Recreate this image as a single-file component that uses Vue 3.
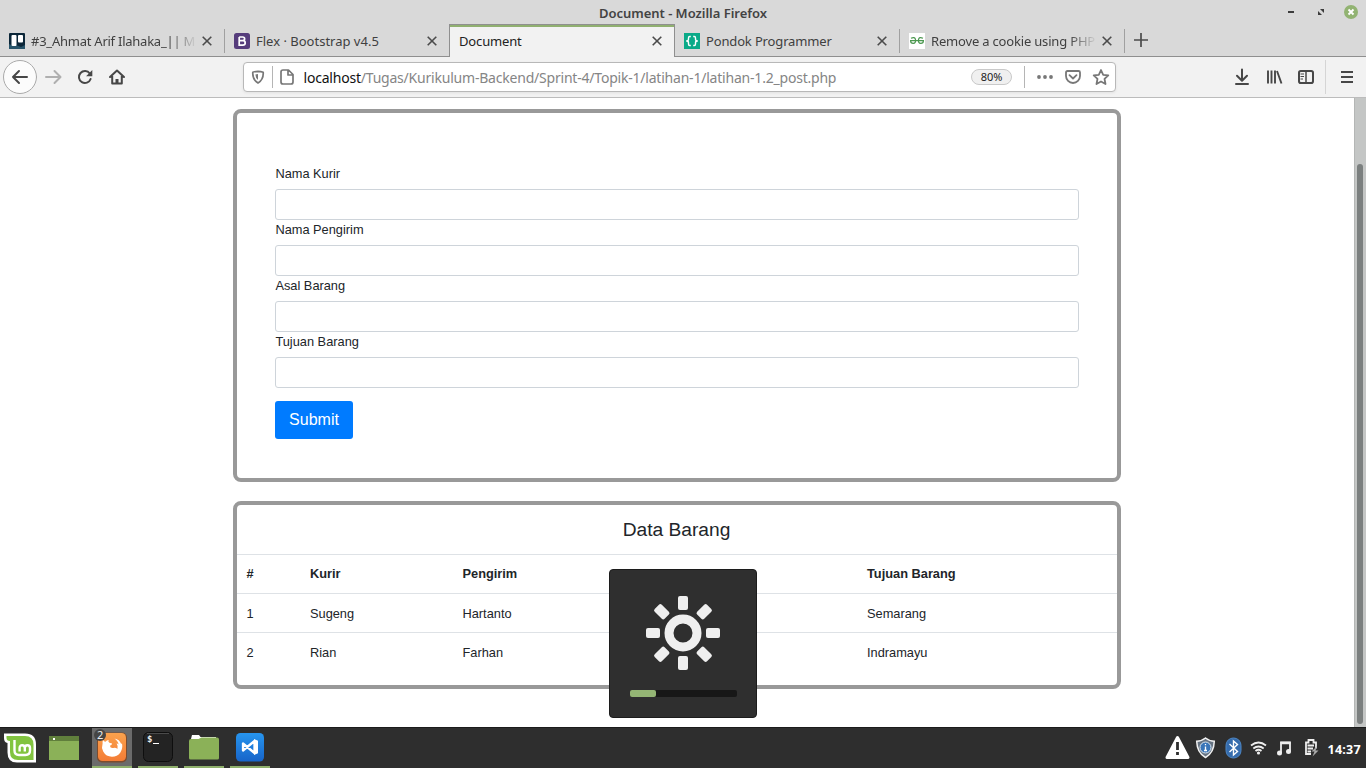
<script setup>
const tabs = [
  { title: '#3_Ahmat Arif Ilahaka_|| M', icon: 'trello', fade: true, cls: 't1' },
  { title: 'Flex · Bootstrap v4.5', icon: 'bootstrap', cls: 't2' },
  { title: 'Document', icon: '', active: true, cls: 't3' },
  { title: 'Pondok Programmer', icon: 'pondok', cls: 't4' },
  { title: 'Remove a cookie using PHP', icon: 'geeks', fade: true, cls: 't5' }
]
const fields = ['Nama Kurir', 'Nama Pengirim', 'Asal Barang', 'Tujuan Barang']
const rows = [
  ['1', 'Sugeng', 'Hartanto', '', 'Semarang'],
  ['2', 'Rian', 'Farhan', '', 'Indramayu']
]
const rays = [0, 45, 90, 135, 180, 225, 270, 315]
</script>

<template>
  <div class="screen">
    <header class="titlebar">
      <span class="wtitle">Document - Mozilla Firefox</span>
      <svg class="wbtns" width="80" height="24" viewBox="0 0 80 24">
        <path d="M2 12h6" stroke="#3c3c3c" stroke-width="2" />
        <path d="M34 9h4v4zM32 11v4h4z" fill="#3c3c3c" />
        <circle cx="65" cy="12" r="7" fill="#92b372" />
        <path d="M62.500 9.500l5 5M67.500 9.500l-5 5" stroke="#fff" stroke-width="1.900" />
      </svg>
    </header>

    <nav class="tabs">
      <div v-for="t in tabs" :key="t.title" class="tab" :class="[t.cls, { active: t.active }]">
        <svg v-if="t.icon === 'trello'" class="fav" width="16" height="16" viewBox="0 0 16 16">
          <rect width="16" height="16" rx="1" fill="#0b2638" />
          <path d="M0 11l4 2 3-1 5 2 4-2v4H0z" fill="#28546a" />
          <rect x="2.500" y="2" width="5" height="11" rx="1" fill="#fff" />
          <rect x="9" y="2" width="5" height="7.500" rx="1" fill="#fff" />
        </svg>
        <svg v-else-if="t.icon === 'bootstrap'" class="fav" width="16" height="16" viewBox="0 0 16 16">
          <rect width="16" height="16" rx="2.500" fill="#563d7c" />
          <path d="M5.200 4h3.400c2.700 0 2.700 3.700 0 3.700H5.200M5.200 7.700h3.600c3.200 0 3.200 4.400 0 4.400H5.200V4" fill="none" stroke="#fff" stroke-width="1.700" />
        </svg>
        <svg v-else-if="t.icon === 'pondok'" class="fav" width="16" height="16" viewBox="0 0 16 16">
          <rect width="16" height="16" fill="#0aaa88" />
          <path d="M6.800 3.500H5.700Q4.500 3.500 4.500 5v1.300Q4.500 8 2.200 8 4.500 8 4.500 9.700V11q0 1.500 1.200 1.500h1.100M9.200 3.500h1.100Q11.500 3.500 11.500 5v1.300Q11.500 8 13.800 8 11.500 8 11.500 9.700V11q0 1.500-1.200 1.500H9.200" fill="none" stroke="#fff" stroke-width="1.400" />
        </svg>
        <svg v-else-if="t.icon === 'geeks'" class="fav" width="16" height="16" viewBox="0 0 16 16">
          <rect width="16" height="16" fill="#fff" />
          <path d="M2 5.200q3.800-1.700 4.500 1.300.5 3.700-2.300 3.900Q1.600 10.300 1.600 7.700H6.500M14 5.200q-3.800-1.700-4.500 1.300-.5 3.700 2.300 3.900 2.600-.1 2.600-2.700H9.500M6.500 7.700h3" fill="none" stroke="#4c9850" stroke-width="1.200" />
        </svg>
        <span class="ttext" :class="{ fade: t.fade }">{{ t.title }}</span>
        <svg class="close" width="10" height="10" viewBox="0 0 10 10"><path d="M.7.7l8.600 8.600M9.300.7L.7 9.300" stroke="#4b4b4b" stroke-width="1.600" /></svg>
      </div>
      <svg class="plus" width="14" height="14" viewBox="0 0 14 14"><path d="M7 0v14M0 7h14" stroke="#4b4b4b" stroke-width="1.700" /></svg>
    </nav>

    <div class="toolbar">
      <svg class="navicons" width="130" height="40" viewBox="0 0 130 40" fill="none" stroke-linecap="round" stroke-linejoin="round">
        <circle cx="20" cy="20" r="16.500" fill="#fcfcfc" stroke="#aaa" />
        <path d="M27 20H13M19 14l-6 6 6 6" stroke="#474747" stroke-width="2" />
        <path d="M46 20h14M54.500 14l6 6-6 6" stroke="#afafaf" stroke-width="2" />
        <path d="M89.800 16.500a6 6 0 1 0 .8 5.500" stroke="#474747" stroke-width="2" />
        <path d="M92.300 13v6.200h-6.200z" fill="#474747" />
        <path d="M110 20l7-6.500 7 6.500M112.200 19v7.500h9.600V19" stroke="#474747" stroke-width="2" />
        <path d="M115.500 27v-5h3v5z" fill="#474747" />
      </svg>
      <div class="url">
        <svg class="shield" width="50" height="28" viewBox="0 0 50 28" fill="none" stroke="#777" stroke-width="1.700" stroke-linejoin="round">
          <path d="M14 8.300Q11 8.500 8.800 9.300q-.5 7 5.200 10.700 5.700-3.700 5.200-10.700Q17 8.500 14 8.300z" />
          <path d="M14 11v6q-2.500-2-2.600-5.400z" fill="#777" stroke="none" />
          <path d="M28.500 3v22" stroke="#b5b5b5" stroke-width="1" />
          <path d="M39 7h5.500l4.500 4.500V19q0 2-2 2h-8q-2 0-2-2V9q0-2 2-2zM44 7v5h5" />
        </svg>
        <span class="addr"><b>localhost</b>/Tugas/Kurikulum-Backend/Sprint-4/Topik-1/latihan-1/latihan-1.2_post.php</span>
        <span class="zoom">80%</span>
        <svg class="acts" width="92" height="28" viewBox="0 0 92 28" fill="none" stroke="#777" stroke-width="1.800" stroke-linejoin="round">
          <path d="M.5 3v22" stroke="#b5b5b5" stroke-width="1" />
          <g fill="#777" stroke="none"><circle cx="15" cy="14" r="1.900" /><circle cx="21" cy="14" r="1.900" /><circle cx="27" cy="14" r="1.900" /></g>
          <path d="M43.500 8h11q1.500 0 1.500 1.500V13a7 7 0 0 1-14 0V9.500Q42 8 43.500 8z" /><path d="M45.500 12.200l3.500 3.300 3.500-3.300" stroke-linecap="round" />
          <path d="M77 7l2.200 4.800 5.100.6-3.800 3.500 1 5.100-4.500-2.500-4.500 2.500 1-5.100-3.800-3.500 5.100-.6z" />
        </svg>
      </div>
      <svg class="tools" width="136" height="40" viewBox="0 0 136 40" fill="none" stroke="#474747" stroke-width="2">
        <path d="M12 12.500v11M7 18.800l5 5 5-5M6 27h12" stroke-linecap="round" stroke-linejoin="round" />
        <path d="M38 13.500v13M41.500 13.500v13M45 13.500v13M47 14l4.500 12.500" stroke-width="1.900" />
        <rect x="69" y="14" width="14" height="12" rx="1.800" /><path d="M76 14v12" stroke-width="1.500" /><path d="M70.500 17h3.500M70.500 19.500h3.500M70.500 22h2.500" stroke-width="1" />
        <path d="M95.500 3v34" stroke="#d5d5d5" stroke-width="1" />
        <path d="M111 15h12M111 20h12M111 25h12" />
      </svg>
    </div>

    <main class="page">
      <div class="content">
        <section class="card form">
          <template v-for="f in fields" :key="f">
            <label>{{ f }}</label>
            <input type="text" />
          </template>
          <button>Submit</button>
        </section>
        <section class="card data">
          <h5>Data Barang</h5>
          <div class="row head"><span>#</span><span>Kurir</span><span>Pengirim</span><span>Asal Barang</span><span>Tujuan Barang</span></div>
          <div v-for="r in rows" :key="r[0]" class="row"><span v-for="(c, i) in r" :key="i">{{ c }}</span></div>
        </section>
      </div>
      <div class="scroll"><div class="thumb"></div></div>
    </main>

    <footer class="taskbar">
      <svg class="launch" width="92" height="41" viewBox="0 0 92 41" fill="none">
        <path d="M4 6.500h21q11 0 11 11v18H17Q7.500 35.500 7.500 25.500V16Q4 15.500 4 11z" fill="#fff" />
        <path d="M6.500 9H25q8.500 0 8.500 8.500V33H18q-8 0-8-8V14q-3.500 0-3.500-3z" fill="#82c440" />
        <path d="M14.500 13v10.500q0 4.500 4.500 4.500h6.500q4.500 0 4.500-4.500V21q0-2.700-2.600-2.700T24.800 21v3.500M24.800 21q0-2.700-2.600-2.700T19.600 21v3.500" stroke="#fff" stroke-width="2.400" />
        <rect x="49" y="9" width="30" height="24" fill="#8bb158" /><rect x="49" y="9" width="30" height="5" fill="#607f3c" /><rect x="53" y="11" width="2" height="2" fill="#fff" />
      </svg>
      <div class="task current">
        <svg width="40" height="41" viewBox="0 0 40 41">
          <defs><linearGradient id="ff" x1="0" y1="0" x2="0" y2="1"><stop stop-color="#faa24d" /><stop offset="1" stop-color="#f47c35" /></linearGradient></defs>
          <rect x="5" y="5.500" width="30" height="30" rx="5" fill="#7c4c2e" />
          <rect x="6" y="6" width="28" height="28" rx="4.500" fill="url(#ff)" />
          <path d="M11 13q.7 1.500 2.500 1.700 1.200-1.500 3.200-1.800-1 1.700.7 2.800l2.700.8q-.2 1.800-2.200 2.200.4 2.600 3.300 2.200 2.800-.5 4.200 1 .8-3.300-.8-5.500 1.200 0 2 1.200-.6-4-4.200-6.200 5.200.8 6.800 5.600l.8-.8q1 5.200-1.600 9.200-3.200 4.300-8.400 4.400-6 0-8.800-5.200-2-4-.6-8-.3-2 .4-3.600z" fill="#fff" />
          <circle cx="8" cy="8" r="6" fill="#454545" />
        </svg>
        <span class="badge">2</span>
      </div>
      <div class="task">
        <svg width="40" height="41" viewBox="0 0 40 41"><rect x="5.500" y="5.500" width="29" height="29" rx="5" fill="#232323" stroke="#0e0e0e" /><path d="M9 6.500h22" stroke="#4b4b4b" /><path d="M15 16.500h6" stroke="#fff" /></svg>
        <span class="dollar">$</span>
      </div>
      <div class="task">
        <svg width="40" height="41" viewBox="0 0 40 41"><path d="M7 12l1-4h7l1.500 2H32v4H7z" fill="#fff" /><path d="M5 14q0-2 2-2h7.500l3-1.500H33q2 0 2 2V31q0 1.500-1.500 1.500h-27Q5 32.500 5 31z" fill="#8bb158" /></svg>
      </div>
      <div class="task">
        <svg width="40" height="41" viewBox="0 0 40 41">
          <defs><linearGradient id="vs" x1="0" y1="0" x2="0" y2="1"><stop stop-color="#2795ee" /><stop offset="1" stop-color="#1764c9" /></linearGradient></defs>
          <rect x="6" y="6" width="28" height="28.500" rx="4.500" fill="url(#vs)" /><path d="M13 16.500v7L24.500 14v12z" fill="none" stroke="#fff" stroke-width="2.300" stroke-linejoin="round" /><path d="M24 12l4 1.700v12.600L24 28z" fill="#fff" />
        </svg>
      </div>
      <svg class="tray" width="158" height="41" viewBox="0 0 158 41" fill="none">
        <path d="M14.500 10.500l10.500 20H4z" fill="#fff" stroke="#fff" stroke-width="3" stroke-linejoin="round" /><path d="M14.500 15v8M14.500 25v3" stroke="#2e2e2e" stroke-width="2.800" />
        <path d="M42.500 11q4 3.200 8.800 3.200-.3 11.500-8.800 16.300-8.500-4.800-8.800-16.300Q38.500 14.200 42.500 11z" fill="#667382" stroke="#f0f0f0" stroke-width="1.500" />
        <circle cx="42.500" cy="20.500" r="5.500" fill="#3975b8" stroke="#d9e6f1" /><path d="M42.500 19.500v4M42.500 17v1.300M41 23.500h3" stroke="#fff" stroke-width="1.300" />
        <rect x="63" y="11" width="15" height="20" rx="7.300" fill="#356cad" stroke="#4e87c5" /><path d="M66.500 17l8 7.500-4 3.500V14l4 3.500-8 7.500" stroke="#fff" stroke-width="1.400" />
        <path d="M88 18.500q7.500-6 15 0M90.300 21.500q5.200-4 10.400 0M92.500 24q3-2.400 6 0" stroke="#eee" stroke-width="1.800" /><circle cx="95.500" cy="26" r="1.600" fill="#eee" />
        <path d="M118 26V15.500h9V24" stroke="#eee" stroke-width="1.800" /><path d="M117.500 16h10" stroke="#eee" stroke-width="2.500" /><circle cx="116.500" cy="26" r="2.500" fill="#eee" /><circle cx="125.500" cy="24.500" r="2.500" fill="#eee" />
        <path d="M148 27h-5V15.500h2.500V13h5v2.500h2.500v6M144.500 18.500h6.500M144.500 21.500h5.500M144.500 24.500h3.500" stroke="#eee" stroke-width="1.800" />
        <path d="M154 19l-5.500 5.500h3l-2 5 6-6h-3z" fill="#aaa" />
      </svg>
      <span class="clock">14:37</span>
    </footer>

    <aside class="osd">
      <svg width="76" height="76" viewBox="-38 -38 76 76">
        <circle r="14" fill="none" stroke="#efefef" stroke-width="9" />
        <rect v-for="a in rays" :key="a" x="-5" y="-37" width="10" height="14" rx="2" fill="#efefef" :transform="`rotate(${a})`" />
      </svg>
      <div class="level"><i></i></div>
    </aside>
  </div>
</template>

<style>
html, body { margin: 0; overflow: hidden; }
</style>
<style scoped>
* { box-sizing: border-box; }
svg { display: block; flex: none; }
.screen { position: relative; width: 1366px; height: 768px; display: flex; flex-direction: column; overflow: hidden; background: #fff; font-family: "Noto Sans", sans-serif; }
.titlebar { height: 24px; background: #d9d9d9; display: flex; align-items: center; justify-content: center; flex: none; position: relative; }
.wtitle { font-size: 13px; font-weight: 600; color: #434343; line-height: 24px; padding-top: 2px; letter-spacing: -.03px; white-space: nowrap; }
.wbtns { position: absolute; right: 0; top: 0; }
.tabs { height: 33px; flex: none; display: flex; background: linear-gradient(#8f8f8f, #8f8f8f) bottom / 100% 1px no-repeat #d9d9d9; }
.tab { width: 225px; height: 33px; display: flex; align-items: center; padding: 1px 13px 0 9px; font-size: 13px; color: #404040; background: linear-gradient(#a0a0a0, #a0a0a0) right 5px / 1px 24px no-repeat; }
.tab.t2 { padding-right: 12px; width: 224px; background: none; }
.tab.active { width: 226px; border: solid #8f8f8f; border-width: 1px 1px 0; background: linear-gradient(#90b070, #90b070) top / 100% 2px no-repeat #f2f2f2; color: #222; padding: 0 12px 0 9px; }
.fav { margin-right: 6px; }
.ttext { flex: 1; min-width: 0; overflow: hidden; white-space: nowrap; line-height: 20px; }
.fade { -webkit-mask-image: linear-gradient(90deg, #000 calc(100% - 28px), transparent); mask-image: linear-gradient(90deg, #000 calc(100% - 28px), transparent); }
.t1 .ttext { letter-spacing: -.24px; margin-right: 5px; }
.t2 .ttext { letter-spacing: 0; }
.t3 .ttext { letter-spacing: -.15px; }
.t4 .ttext { letter-spacing: -.15px; }
.t5 .ttext { letter-spacing: -.18px; margin-right: 5px; }
.close { margin-left: auto; flex: none; }
.plus { margin: 9px 0 0 9px; }
.toolbar { height: 41px; flex: none; display: flex; background: #f2f2f2; border-bottom: 1px solid #bcbcbc; }
.url { display: flex; align-items: center; width: 873px; height: 30px; margin: 5px 0 0 113px; background: #fff; border: 1px solid #b8b8b8; border-radius: 4px; box-shadow: 0 1px 3px #0001; }
.addr { font-size: 14px; color: #858585; margin-left: 9.500px; white-space: nowrap; letter-spacing: -.21px; flex: 1; }
.addr b { font-weight: 400; color: #111; }
.zoom { width: 41px; height: 16px; border: 1px solid #c9c9c9; border-radius: 8px; background: #f0f0f0; font-size: 11px; line-height: 14px; text-align: center; color: #222; margin-right: 12px; }
.acts { margin-right: -1px; }
.tools { margin-left: auto; }
.page { height: 629px; flex: none; display: flex; font-family: "Liberation Sans", Arial, sans-serif; color: #212529; font-size: 12.8px; }
.content { flex: 1; padding: 11px 0 0 233px; }
.card { width: 888px; border: 4px solid #999; border-radius: 8px; }
.form { height: 373px; padding: 51px 38px 0; display: flex; flex-direction: column; align-items: flex-start; }
.form label { line-height: 19px; height: 19px; margin-bottom: 6px; padding-left: .4px; }
.form input { width: 804px; height: 31px; border: 1px solid #ced4da; border-radius: 3px; background: #fff; padding: 0; margin: 0; }
.form button { margin-top: 13px; width: 78px; height: 38px; padding: 0; border: 0; border-radius: 3px; background: #007bff; color: #fff; font: 16px "Liberation Sans", Arial, sans-serif; }
.data { height: 188px; margin-top: 19px; }
h5 { margin: 0; height: 49px; line-height: 49px; font-size: 19.2px; font-weight: 400; text-align: center; padding-right: 1px; }
.row { display: grid; grid-template-columns: 63.400px 152.500px 202px 202.500px 1fr; height: 39px; border-top: 1px solid #dee2e6; padding-left: 9.600px; line-height: 39px; }
.head { font-weight: 700; line-height: 38px; }
.scroll { width: 12px; background: #c4c6c5; border-left: 1px solid #b4b6b5; padding: 66px 0 0 2px; }
.thumb { width: 6px; height: 560px; border-radius: 3px; background: #7b7f7f; }
.taskbar { height: 41px; flex: none; display: flex; background: #2e2e2e; border-top: 1px solid #1c1c1c; }
.taskbar svg { margin-top: -1px; }
.task { position: relative; width: 40px; height: 40px; margin-right: 6px; border-bottom: 2px solid #8fb06c; }
.task svg { position: absolute; left: 0; top: 0; }
.current { background: #6b6b6b; }
.badge { position: absolute; left: 5px; top: -1px; font-size: 11px; line-height: 16px; color: #eee; }
.dollar { position: absolute; left: 9px; top: 4px; font: 700 9px/14px "DejaVu Sans Mono", monospace; color: #eee; }
.tray { margin-left: auto; }
.clock { width: 45.500px; padding-left: 7px; font-size: 12.5px; font-weight: 700; color: #fff; line-height: 43px; white-space: nowrap; letter-spacing: .25px; }
.osd { position: absolute; left: 609px; top: 569px; width: 148px; height: 149px; background: #2f2f2f; border: 1px solid #1c1c1c; border-radius: 4px; display: flex; flex-direction: column; align-items: center; padding-top: 25px; }
.osd svg { margin-right: 1px; }
.level { width: 107px; height: 7px; border-radius: 2px; background: #171717; margin-top: 19px; }
.level i { display: block; width: 26px; height: 7px; border-radius: 2px; background: #94b574; }
</style>
